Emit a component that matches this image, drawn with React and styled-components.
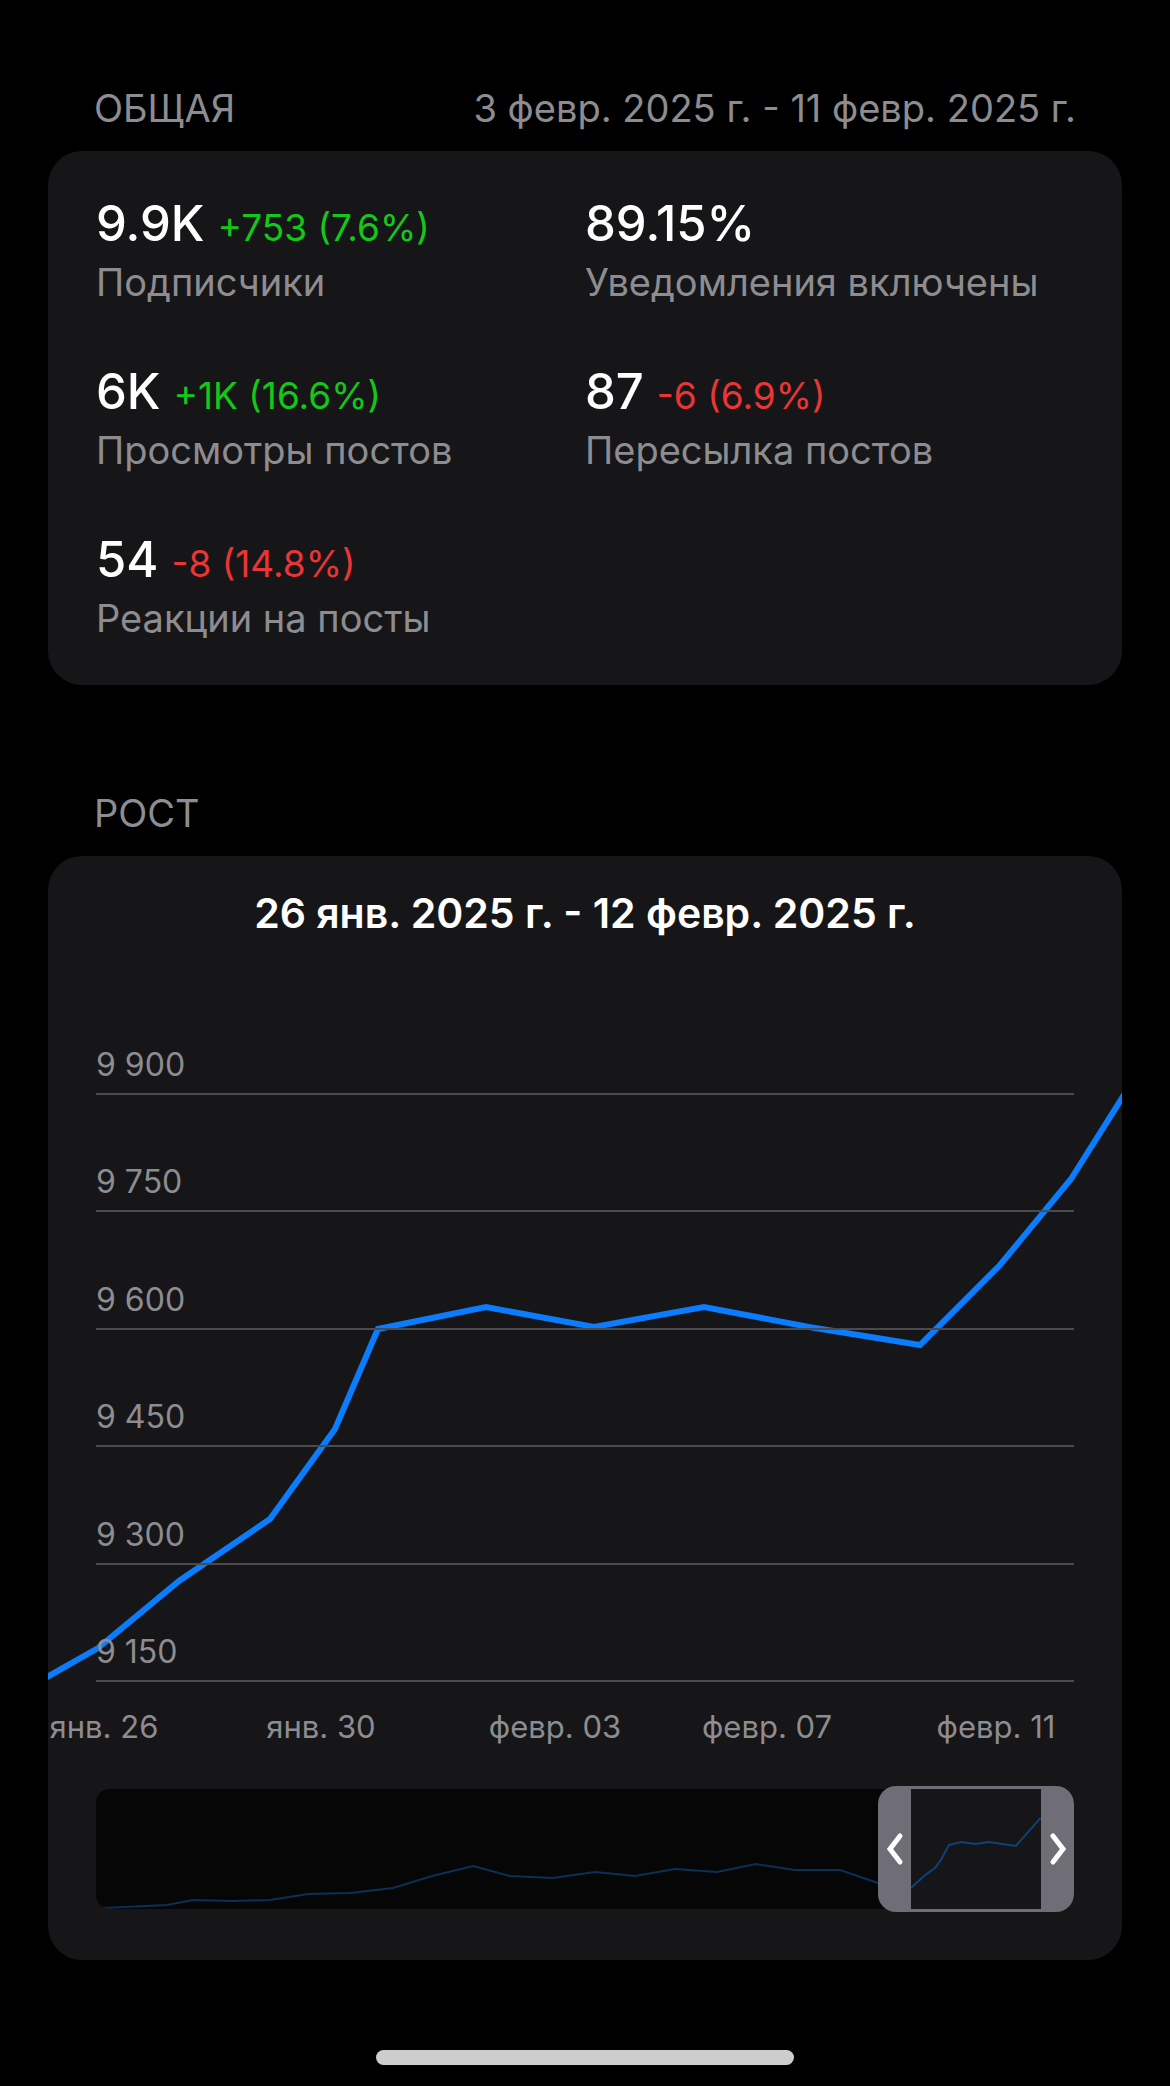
import React from "react";
import styled, { createGlobalStyle } from "styled-components";

const GlobalStyle = createGlobalStyle`
  *, *::before, *::after { box-sizing: border-box; }
  body {
    margin: 0;
    background: #000;
    color: #fff;
    font-family: Inter, "Liberation Sans", sans-serif;
  }
  h2, h3, p, dl, dt, dd { margin: 0; font-weight: 400; }
`;

const Page = styled.main`
  display: flex;
  flex-direction: column;
  gap: 104px;
  padding: 84px 48px 21px;
`;

const Section = styled.section`
  display: flex;
  flex-direction: column;
  gap: 19px;
`;

const SectionHeader = styled.header`
  display: flex;
  justify-content: space-between;
  padding: 0 46px;
  color: #8d8d91;
  font-size: 38px;
  line-height: 48px;
`;

const SectionTitle = styled.h2`
  font-size: inherit;
  text-transform: uppercase;
`;

const Card = styled.div`
  background: #161618;
  border-radius: 34px;
  overflow: hidden;
`;

const StatGrid = styled.dl`
  display: grid;
  grid-template-columns: 1fr 1fr;
  row-gap: 58px;
  padding: 45px 48px 43px;
`;

const Stat = styled.div`
  display: flex;
  flex-direction: column-reverse;
  gap: 6px;
`;

const StatLabel = styled.dt`
  color: #8d8d91;
  font-size: 38px;
  line-height: 48px;
`;

const StatValue = styled.dd`
  display: flex;
  align-items: baseline;
  gap: 13px;
  height: 56px;
  font-size: 49px;
  font-weight: 500;
  line-height: 56px;
`;

const Delta = styled.span`
  color: ${({ $positive }) => ($positive ? "#14c81a" : "#e93535")};
  font-size: 37px;
  font-weight: 400;
  line-height: 48px;
`;

const ChartTitle = styled.h3`
  padding-top: 33px;
  font-size: 41px;
  font-weight: 600;
  line-height: 48px;
  text-align: center;
`;

const Chart = styled.svg`
  display: block;
  width: 100%;
  height: auto;
`;

const SeriesLine = styled.polyline`
  fill: none;
  stroke: #0a7cfc;
  stroke-width: 6px;
  stroke-linejoin: miter;
`;

const GridLine = styled.line`
  stroke: #4b4b4d;
  stroke-width: 2px;
`;

const AxisLabel = styled.text`
  fill: #8d8d91;
  font-size: 32px;
`;

const DateLabel = styled(AxisLabel)`
  font-size: 31px;
  text-anchor: middle;
`;

const RangeBar = styled.div`
  display: grid;
  grid-template-columns: 4fr 1fr;
  margin: 24px 48px 48px;
`;

const Track = styled.div`
  grid-area: 1 / 1 / 2 / 3;
  margin: 3px 0;
  height: 120px;
  border-radius: 14px;
  background: #060607;
  overflow: hidden;
`;

const TrackChart = styled.svg`
  display: block;
  width: 100%;
  height: 100%;
`;

const TrackLine = styled.polyline`
  fill: none;
  stroke: ${({ $active }) => ($active ? "#0d4379" : "#0b2f57")};
  stroke-width: 2px;
`;

const RangeWindow = styled.div`
  grid-area: 1 / 2 / 2 / 3;
  z-index: 1;
  display: flex;
  border-radius: 18px;
  background: #6f6e76;
  overflow: hidden;
`;

const RangeView = styled.div`
  flex: 1;
  margin: 3px 0;
  background: #161618;
`;

const Handle = styled.button`
  display: flex;
  align-items: center;
  justify-content: center;
  width: 33px;
  padding: 0;
  border: 0;
  background: transparent;
  color: #fff;
  cursor: ew-resize;
`;

const HomeIndicator = styled.div`
  align-self: center;
  width: 39%;
  height: 15px;
  margin-top: -14px;
  border-radius: 8px;
  background: #cdcdcd;
`;

const stats = [
  { label: "Подписчики", value: "9.9K", delta: "+753 (7.6%)", positive: true },
  { label: "Уведомления включены", value: "89.15%" },
  { label: "Просмотры постов", value: "6K", delta: "+1K (16.6%)", positive: true },
  { label: "Пересылка постов", value: "87", delta: "-6 (6.9%)" },
  { label: "Реакции на посты", value: "54", delta: "-8 (14.8%)" },
];

const rows = [
  { y: 157, label: "9 900" },
  { y: 274, label: "9 750" },
  { y: 392, label: "9 600" },
  { y: 509, label: "9 450" },
  { y: 627, label: "9 300" },
  { y: 744, label: "9 150" },
];

const dates = [
  { x: 56, label: "янв. 26" },
  { x: 273, label: "янв. 30" },
  { x: 507, label: "февр. 03" },
  { x: 719, label: "февр. 07" },
  { x: 948, label: "февр. 11" },
];

const series =
  "-8,744 50,711 131,644 222,582 287,492 330,392 438,370 546,390 656,370 761,390 872,408 952,328 1023,242 1074,161 1082,148";

const history =
  "7,119 71,116 97,111 136,112 174,111 212,105 254,104 297,99 336,87 377,77 414,87 457,89 499,83 539,87 579,80 621,83 660,75 699,81 744,81 782,94 816,100";

const selected =
  "0,99 13,87 24,79 30,71 38,56 50,53 65,55 78,53 105,57 130,29";

function Chevron({ points }) {
  return (
    <svg width="18" height="34" viewBox="0 0 18 34" aria-hidden="true">
      <polyline
        points={points}
        fill="none"
        stroke="currentColor"
        strokeWidth="5"
        strokeLinecap="round"
        strokeLinejoin="miter"
      />
    </svg>
  );
}

export default function App() {
  return (
    <>
      <GlobalStyle />
      <Page>
        <Section>
          <SectionHeader>
            <SectionTitle>Общая</SectionTitle>
            <p>3 февр. 2025 г. - 11 февр. 2025 г.</p>
          </SectionHeader>
          <Card>
            <StatGrid>
              {stats.map((s) => (
                <Stat key={s.label}>
                  <StatLabel>{s.label}</StatLabel>
                  <StatValue>
                    {s.value}
                    {s.delta && <Delta $positive={s.positive}>{s.delta}</Delta>}
                  </StatValue>
                </Stat>
              ))}
            </StatGrid>
          </Card>
        </Section>

        <Section>
          <SectionHeader>
            <SectionTitle>Рост</SectionTitle>
          </SectionHeader>
          <Card>
            <ChartTitle>26 янв. 2025 г. - 12 февр. 2025 г.</ChartTitle>
            <Chart viewBox="0 0 1074 825" role="img" aria-label="Рост">
              <SeriesLine points={series} />
              {rows.map((r) => (
                <g key={r.label}>
                  <GridLine x1="48" x2="1026" y1={r.y} y2={r.y} />
                  <AxisLabel x="48" y={r.y - 18}>{r.label}</AxisLabel>
                </g>
              ))}
              {dates.map((d) => (
                <DateLabel key={d.label} x={d.x} y="801">
                  {d.label}
                </DateLabel>
              ))}
            </Chart>
            <RangeBar>
              <Track>
                <TrackChart viewBox="0 0 978 120" preserveAspectRatio="none">
                  <TrackLine points={history} />
                </TrackChart>
              </Track>
              <RangeWindow>
                <Handle type="button" aria-label="Начало периода">
                  <Chevron points="14,4 4,17 14,30" />
                </Handle>
                <RangeView>
                  <TrackChart viewBox="0 0 130 120" preserveAspectRatio="none">
                    <TrackLine $active points={selected} />
                  </TrackChart>
                </RangeView>
                <Handle type="button" aria-label="Конец периода">
                  <Chevron points="4,4 14,17 4,30" />
                </Handle>
              </RangeWindow>
            </RangeBar>
          </Card>
        </Section>

        <HomeIndicator />
      </Page>
    </>
  );
}
